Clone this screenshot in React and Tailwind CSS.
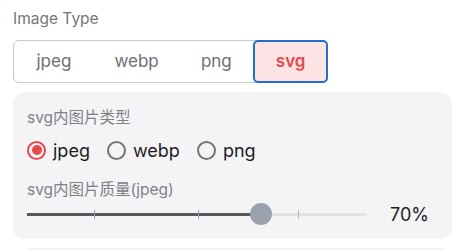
import { useState } from 'react'

const TYPES = [
  { key: 'jpeg', w: 'w-[80px]' },
  { key: 'webp', w: 'w-[86px]' },
  { key: 'png',  w: 'w-[74px]' },
  { key: 'svg',  w: 'w-[75px]' },
]
const INNER = ['jpeg', 'webp', 'png']
// tick offsets along the track, px
const TICKS = [67, 171, 271]

export default function App() {
  const [type, setType] = useState('svg')
  const [inner, setInner] = useState('jpeg')
  const [quality, setQuality] = useState(70)

  const thumb = 11 + (quality / 100) * 318

  return (
    <div className="w-[462px] h-[250px] overflow-hidden bg-white px-[13px] pt-[8px] font-['Inter','Noto_Sans_CJK_SC',sans-serif]">
      <div className="text-[15.5px] leading-[22px] text-[#76767b]">Image Type</div>

      {/* segmented */}
      <div className="mt-[10px] flex w-[315px] h-[43px] rounded-[6px] border border-[#c9c9cc]">
        {TYPES.map(t => (
          <button
            key={t.key}
            onClick={() => setType(t.key)}
            className={
              t.key === type
                ? `${t.w} -my-px -mr-px ml-auto rounded-[5px] border-2 border-[#1f6fd1] bg-[#fde3e3] text-[17px] font-semibold text-[#e5484d]`
                : `${t.w} text-[17px] text-[#6e6e73]`
            }
          >
            {t.key}
          </button>
        ))}
      </div>

      {/* svg options panel */}
      <div className="mt-[9px] w-[439px] rounded-[12px] bg-[#f4f4f6] px-[14px] pt-[15px] pb-[12px]">
        <div className="text-[15.5px] leading-[22px] text-[#808085]">svg内图片类型</div>
        <div className="mt-[6px] flex items-center gap-[17px] h-[30px]">
          {INNER.map(v => (
            <label key={v} className="flex items-center gap-[7px] cursor-pointer" onClick={() => setInner(v)}>
              {v === inner ? (
                <span className="w-[19px] h-[19px] rounded-full border-2 border-[#e5484d] flex items-center justify-center">
                  <span className="w-[10px] h-[10px] rounded-full bg-[#e5484d]" />
                </span>
              ) : (
                <span className="w-[19px] h-[19px] rounded-full border-2 border-[#76767a]" />
              )}
              <span className="text-[18px] text-[#1d1d1f]">{v}</span>
            </label>
          ))}
        </div>

        <div className="mt-[14px] text-[15.5px] leading-[22px] text-[#808085]">svg内图片质量(jpeg)</div>
        <div className="flex items-center h-[26px]">
          <div className="relative w-[340px] h-[26px]">
            <div className="absolute left-0 right-0 top-[12px] h-[3px] bg-[#e3e3e6]" />
            <div className="absolute left-0 top-[12px] h-[3px] bg-[#58585c]" style={{ width: thumb }} />
            {TICKS.map(t => (
              <div
                key={t}
                className={`absolute top-[9px] w-px h-[9px] ${t <= thumb ? 'bg-[#9a9aa0]' : 'bg-[#b8b8bd]'}`}
                style={{ left: t }}
              />
            ))}
            <div
              className="absolute top-[2px] w-[22px] h-[22px] -ml-[11px] rounded-full bg-[#9aa2ad]"
              style={{ left: thumb }}
            />
            <input
              type="range"
              min={0}
              max={100}
              value={quality}
              onChange={e => setQuality(+e.target.value)}
              className="absolute inset-0 w-full opacity-0 cursor-pointer"
            />
          </div>
          <span className="ml-[23px] text-[18px] text-[#1d1d1f]">{quality}%</span>
        </div>
      </div>

      <div className="mt-[9px] ml-[7px] w-[432px] h-[20px] rounded-t-[12px] bg-[#f4f4f6]" />
    </div>
  )
}
